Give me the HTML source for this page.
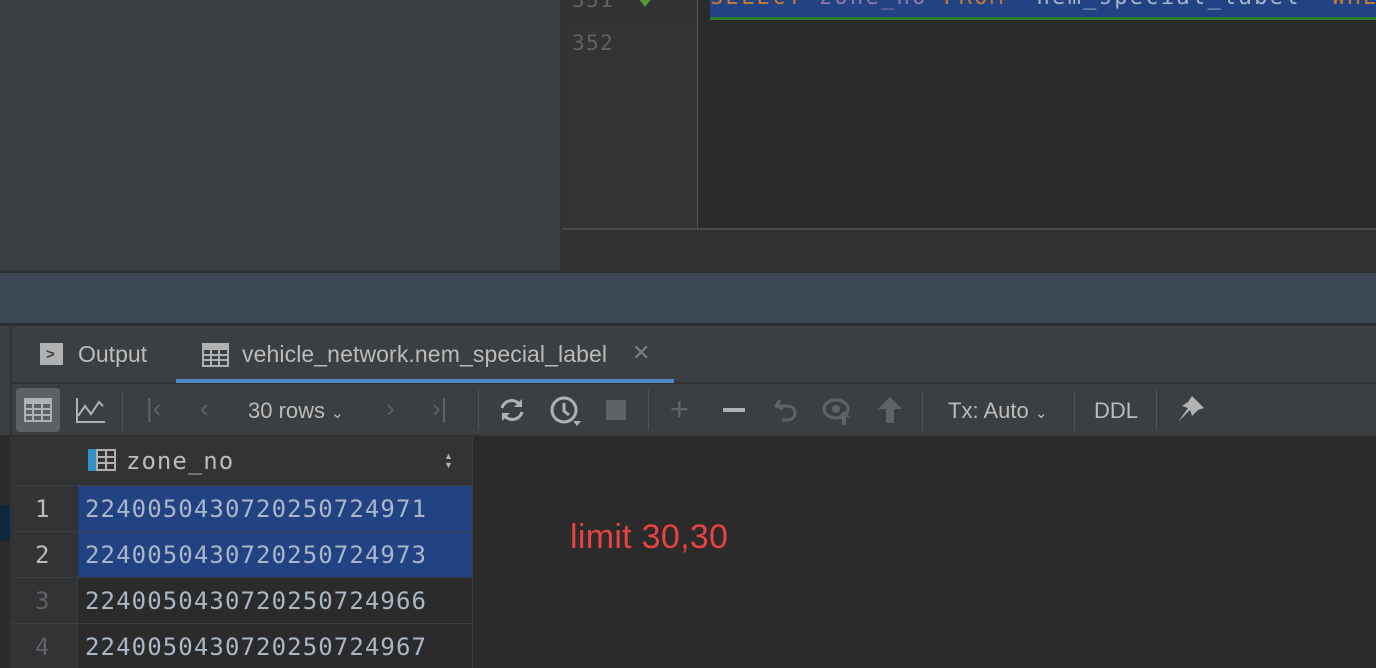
<!DOCTYPE html>
<html><head><meta charset="utf-8"><style>
body{margin:0;width:1376px;height:668px;overflow:hidden;background:#2b2b2b;position:relative;font-family:"Liberation Sans",sans-serif}
div{position:absolute;box-sizing:border-box}
.mono{font-family:"DejaVu Sans Mono","Liberation Mono",monospace}
.num{font-size:24px;color:#a9b7c6;letter-spacing:1.1px}
</style></head><body>
<div style="left:0;top:0;width:560px;height:270px;background:#3c3f41"></div>
<div style="left:560px;top:0;width:2px;height:270px;background:#323232"></div>
<div style="left:562px;top:0;width:135px;height:228px;background:#313335"></div>
<div style="left:697px;top:0;width:1px;height:228px;background:#555"></div>
<div style="left:562px;top:0;width:135px;height:18px;background:#323232"></div>
<div class="mono" style="left:572px;top:-12px;font-size:21px;color:#606366;letter-spacing:1.4px">351</div>
<div style="left:638px;top:-2px;width:0;height:0;border-left:7px solid transparent;border-right:7px solid transparent;border-top:9px solid #4e9a3a"></div>
<div class="mono" style="left:572px;top:31px;font-size:21px;color:#606366;letter-spacing:1.4px">352</div>
<div style="left:710px;top:0;width:666px;height:20px;background:#214283;border-bottom:3px solid #2f7d2f"></div>
<div class="mono" style="left:710px;top:-15px;font-size:22px;white-space:pre;color:#cc7832;letter-spacing:2.3px">SELECT <span style="color:#9876aa">zone_no</span> FROM  <span style="color:#a9b7c6">nem_special_label</span>  WHE</div>
<div style="left:562px;top:228px;width:814px;height:2px;background:#4a4a4a"></div>
<div style="left:562px;top:230px;width:814px;height:40px;background:#2f3133"></div>
<div style="left:0;top:270px;width:1376px;height:3px;background:#2f3133"></div>
<div style="left:0;top:273px;width:1376px;height:50px;background:#3b4754"></div>
<div style="left:0;top:323px;width:1376px;height:3px;background:#2b2d2f"></div>
<div style="left:0;top:326px;width:1376px;height:109px;background:#3c3f41"></div>
<div style="left:10px;top:326px;width:2px;height:342px;background:#323232"></div>
<div style="left:12px;top:382px;width:1364px;height:2px;background:#323232"></div>
<!-- tabs -->
<div style="left:40px;top:343px;width:23px;height:22px;background:#afb1b3"></div>
<div style="left:46px;top:346px;color:#3c3f41;font-size:15px;font-weight:bold">&gt;</div>
<div style="left:78px;top:341px;font-size:23px;color:#bbbbbb">Output</div>
<svg style="position:absolute;left:202px;top:343px" width="27" height="24"><rect x="1" y="1" width="25" height="22" fill="none" stroke="#afb1b3" stroke-width="2"/><rect x="1" y="1" width="25" height="6" fill="#afb1b3"/><path d="M1 12H26M1 17H26M9 7V23M17 7V23" stroke="#afb1b3" stroke-width="2"/></svg>
<div style="left:242px;top:341px;font-size:23px;color:#bbbbbb;letter-spacing:0.1px">vehicle_network.nem_special_label</div>
<div style="left:632px;top:340px;font-size:22px;color:#7a7c7e">✕</div>
<div style="left:176px;top:379px;width:498px;height:4px;background:#4a88c7"></div>
<!-- toolbar -->
<div style="left:16px;top:388px;width:44px;height:44px;background:#5c6164;border-radius:4px"></div>
<svg style="position:absolute;left:24px;top:398px" width="28" height="24"><rect x="1" y="1" width="26" height="22" fill="none" stroke="#afb1b3" stroke-width="2"/><rect x="1" y="1" width="26" height="5" fill="#afb1b3"/><path d="M1 11H27M1 17H27M9 6V23M18 6V23" stroke="#afb1b3" stroke-width="2"/></svg>
<svg style="position:absolute;left:75px;top:396px" width="32" height="28"><path d="M2 2V26H30" fill="none" stroke="#afb1b3" stroke-width="2"/><path d="M3 20L10 10L16 18L24 6L28 10" fill="none" stroke="#afb1b3" stroke-width="2"/></svg>
<div style="left:122px;top:390px;width:1px;height:40px;background:#515658"></div>
<div style="left:146px;top:393px;font-size:26px;color:#606366">|‹</div>
<div style="left:200px;top:393px;font-size:26px;color:#606366">‹</div>
<div style="left:248px;top:398px;font-size:22px;color:#bbbbbb">30 rows <span style="font-size:15px">⌄</span></div>
<div style="left:386px;top:393px;font-size:26px;color:#606366">›</div>
<div style="left:432px;top:393px;font-size:26px;color:#606366">›|</div>
<div style="left:478px;top:390px;width:1px;height:40px;background:#515658"></div>
<svg style="position:absolute;left:498px;top:397px" width="28" height="26"><path d="M22 8A10 10 0 0 0 4 11M6 18A10 10 0 0 0 24 15" fill="none" stroke="#afb1b3" stroke-width="3"/><path d="M24 2V10H16Z M4 24V16H12Z" fill="#afb1b3"/></svg>
<svg style="position:absolute;left:549px;top:395px" width="34" height="34"><circle cx="15" cy="15" r="12" fill="none" stroke="#afb1b3" stroke-width="3"/><path d="M15 8V16L20 20" fill="none" stroke="#afb1b3" stroke-width="3"/><path d="M24 26H32L28 31Z" fill="#afb1b3"/></svg>
<div style="left:606px;top:400px;width:20px;height:20px;background:#606366"></div>
<div style="left:648px;top:390px;width:1px;height:40px;background:#515658"></div>
<div style="left:670px;top:391px;font-size:32px;color:#606366">+</div>
<div style="left:723px;top:408px;width:22px;height:4px;background:#afb1b3"></div>
<svg style="position:absolute;left:772px;top:396px" width="30" height="28"><path d="M8 4L4 10L11 13" fill="none" stroke="#606366" stroke-width="3"/><path d="M5 10H16A7 7 0 0 1 16 24H10" fill="none" stroke="#606366" stroke-width="3"/></svg>
<svg style="position:absolute;left:822px;top:397px" width="34" height="30"><ellipse cx="14" cy="12" rx="12" ry="9" fill="none" stroke="#606366" stroke-width="3"/><circle cx="14" cy="12" r="4" fill="#606366"/><path d="M22 14L28 20H24V28H20V20H16Z" fill="#606366"/></svg>
<svg style="position:absolute;left:876px;top:395px" width="28" height="30"><path d="M14 2L26 14H18V28H10V14H2Z" fill="#606366"/></svg>
<div style="left:922px;top:390px;width:1px;height:40px;background:#515658"></div>
<div style="left:948px;top:398px;font-size:22px;color:#bbbbbb">Tx: Auto <span style="font-size:15px">⌄</span></div>
<div style="left:1074px;top:390px;width:1px;height:40px;background:#515658"></div>
<div style="left:1094px;top:398px;font-size:22px;color:#bbbbbb">DDL</div>
<div style="left:1156px;top:390px;width:1px;height:40px;background:#515658"></div>
<svg style="position:absolute;left:1174px;top:394px" width="32" height="32"><path d="M18 2L30 14L24 16L18 22L16 16L4 28L14 14L8 12L14 8Z" fill="#afb1b3"/></svg>
<!-- table -->
<div style="left:12px;top:435px;width:1364px;height:2px;background:#323232"></div>
<div style="left:12px;top:437px;width:65px;height:231px;background:#313335"></div>
<div style="left:77px;top:437px;width:396px;height:48px;background:#313335"></div>
<div style="left:88px;top:449px;width:8px;height:22px;background:#3592c4"></div>
<svg style="position:absolute;left:96px;top:449px" width="20" height="22"><rect x="1" y="1" width="18" height="20" fill="none" stroke="#afb1b3" stroke-width="2"/><path d="M1 8H19M1 14H19M10 1V21" stroke="#afb1b3" stroke-width="2"/></svg>
<div class="mono" style="left:126px;top:447px;font-size:24px;color:#bbbbbb;letter-spacing:1px">zone_no</div>
<div style="left:444px;top:452px;font-size:9px;color:#afb1b3;line-height:9px">▲<br>▼</div>
<div style="left:0;top:505px;width:10px;height:36px;background:#0d293e"></div>
<div style="left:12px;top:485px;width:461px;height:1px;background:#3c3f41"></div>
<div style="left:78px;top:486px;width:395px;height:45px;background:#214283"></div>
<div style="left:78px;top:532px;width:395px;height:45px;background:#214283"></div>
<div style="left:12px;top:531px;width:461px;height:1px;background:#3c3f41"></div>
<div style="left:12px;top:577px;width:461px;height:1px;background:#3c3f41"></div>
<div style="left:12px;top:623px;width:461px;height:1px;background:#3c3f41"></div>
<div style="left:77px;top:577px;width:1px;height:91px;background:#3c3f41"></div>
<div style="left:472px;top:437px;width:1px;height:231px;background:#3c3f41"></div>
<div class="mono" style="left:35px;top:495px;font-size:24px;color:#bbbbbb">1</div>
<div class="mono" style="left:35px;top:541px;font-size:24px;color:#bbbbbb">2</div>
<div class="mono" style="left:35px;top:587px;font-size:24px;color:#606366">3</div>
<div class="mono" style="left:35px;top:633px;font-size:24px;color:#606366">4</div>
<div class="mono num" style="left:85px;top:495px">2240050430720250724971</div>
<div class="mono num" style="left:85px;top:541px">2240050430720250724973</div>
<div class="mono num" style="left:85px;top:587px">2240050430720250724966</div>
<div class="mono num" style="left:85px;top:633px">2240050430720250724967</div>
<div style="left:570px;top:518px;font-size:34px;color:#e8433f;letter-spacing:0.3px">limit 30,30</div>
</body></html>
